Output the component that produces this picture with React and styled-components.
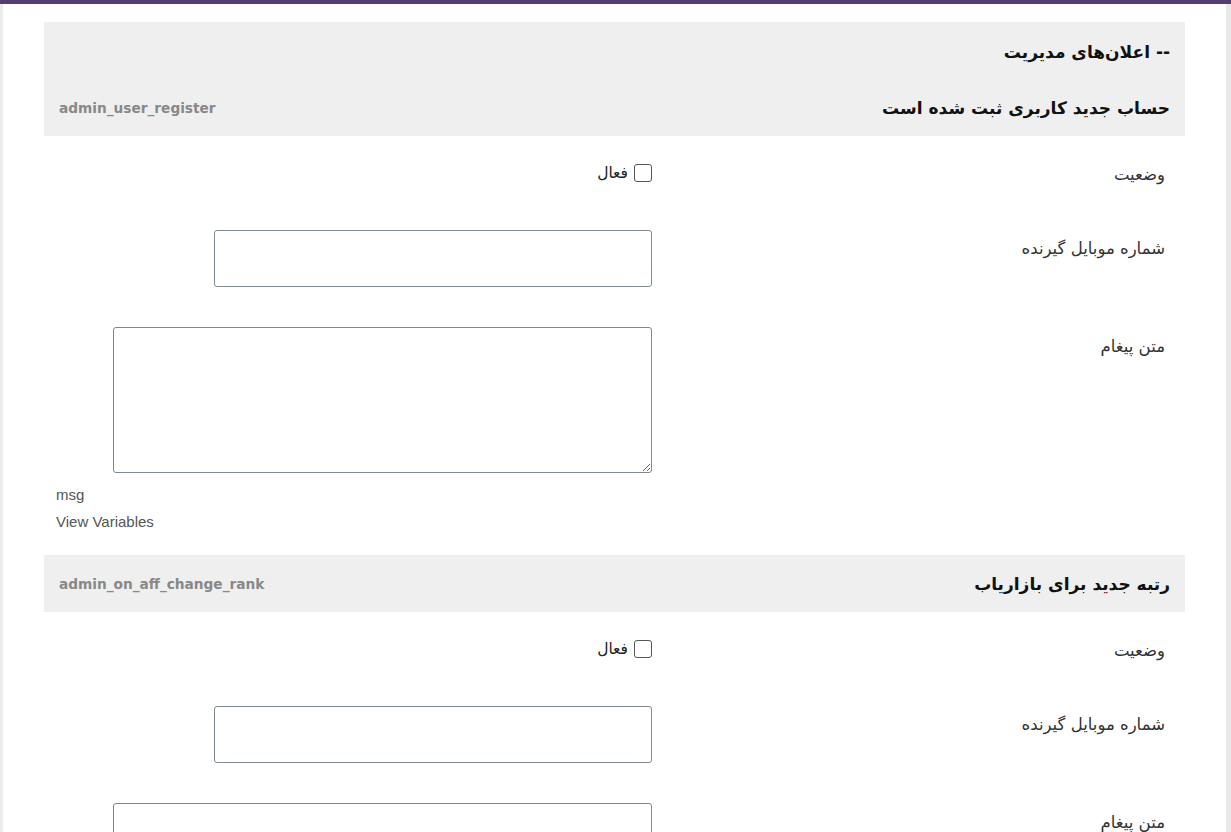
import React from 'react';
import styled, { createGlobalStyle } from 'styled-components';

const GlobalStyle = createGlobalStyle`
  body {
    margin: 0;
    background: #fff;
    font-family: "DejaVu Sans", sans-serif;
  }
`;

const Page = styled.div`
  border-top: 4px solid #523f6e;
  min-height: 900px;
  display: flex;
`;

const LeftEdge = styled.div`
  width: 3px;
  background: #ececec;
`;

const RightEdge = styled.div`
  width: 5px;
  background: #e9e9e9;
`;

const Main = styled.div`
  flex: 1;
  padding: 18px 41px 0 41px;
  direction: rtl;
`;

const GroupTitle = styled.div`
  background: #efefef;
  padding: 18px 15px 15px;
  font-size: 17px;
  font-weight: bold;
  line-height: 24px;
  color: #111;
`;

const SectionHead = styled.div`
  background: #efefef;
  padding: 17px 15px 16px;
  display: flex;
  justify-content: space-between;
  align-items: center;
  line-height: 24px;
`;

const SectionName = styled.h3`
  margin: 0;
  font-size: 17px;
  font-weight: bold;
  color: #111;
`;

const SectionKey = styled.span`
  direction: ltr;
  font-size: 13.7px;
  font-weight: bold;
  color: #888;
`;

const Row = styled.div`
  display: grid;
  grid-template-columns: 533px 1fr;
  align-items: start;
  padding: ${(p) => p.$pad || '20px 0'};
`;

const Label = styled.div`
  padding-right: 20px;
  padding-top: ${(p) => p.$offset || 0}px;
  font-size: 16.5px;
  line-height: 22px;
  color: #333;
`;

const Field = styled.div`
  padding-left: 12px;
`;

const CheckWrap = styled.label`
  display: flex;
  align-items: center;
  gap: 6px;
  font-size: 15.5px;
  line-height: 18px;
  color: #222;
`;

const Box = styled.input.attrs({ type: 'checkbox' })`
  appearance: none;
  margin: 0;
  width: 18px;
  height: 18px;
  border: 1px solid #50575e;
  border-radius: 3px;
  background: #fff;
`;

const TextInput = styled.input.attrs({ type: 'text' })`
  display: block;
  box-sizing: border-box;
  width: 438px;
  height: 57px;
  margin: 0;
  border: 1px solid #7e8993;
  border-radius: 3px;
  background: #fff;
`;

const TextArea = styled.textarea`
  display: block;
  direction: ltr;
  box-sizing: border-box;
  width: 539px;
  height: 146px;
  margin: 0 0 0 auto;
  border: 1px solid #7e8993;
  border-radius: 3px;
  background: #fff;
`;

const Notes = styled.div`
  direction: ltr;
  text-align: left;
  margin-top: 8px;
  font-family: "Liberation Sans", Arial, sans-serif;
  font-size: 15px;
  line-height: 27px;
  color: #555;
`;

const sections = [
  { title: 'حساب جدید کاربری ثبت شده است', key: 'admin_user_register' },
  { title: 'رتبه جدید برای بازاریاب', key: 'admin_on_aff_change_rank' },
];

const Section = ({ title, code }) => (
  <>
    <SectionHead>
      <SectionName>{title}</SectionName>
      <SectionKey>{code}</SectionKey>
    </SectionHead>
    <Row $pad="28px 0 24px">
      <Label>وضعیت</Label>
      <Field>
        <CheckWrap>
          <Box />
          فعال
        </CheckWrap>
      </Field>
    </Row>
    <Row>
      <Label $offset={8}>شماره موبایل گیرنده</Label>
      <Field>
        <TextInput />
      </Field>
    </Row>
    <Row>
      <Label $offset={9}>متن پیغام</Label>
      <Field>
        <TextArea />
        <Notes>
          <div>msg</div>
          <div>View Variables</div>
        </Notes>
      </Field>
    </Row>
  </>
);

export default function App() {
  return (
    <>
      <GlobalStyle />
      <Page>
        <LeftEdge />
        <Main>
          <GroupTitle>-- اعلان‌های مدیریت</GroupTitle>
          {sections.map((s) => (
            <Section key={s.key} title={s.title} code={s.key} />
          ))}
        </Main>
        <RightEdge />
      </Page>
    </>
  );
}
